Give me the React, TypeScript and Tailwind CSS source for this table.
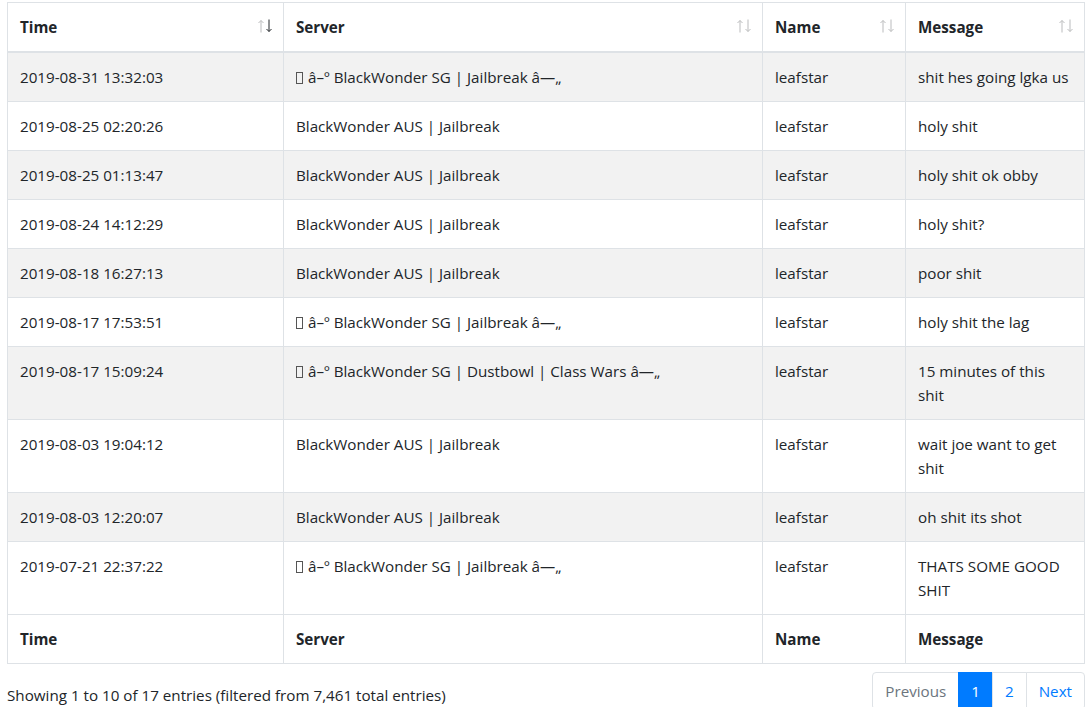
const rows = [
  { time: "2019-08-31 13:32:03", sg: true, server: "BlackWonder SG | Jailbreak", msg: "shit hes going lgka us" },
  { time: "2019-08-25 02:20:26", sg: false, server: "BlackWonder AUS | Jailbreak", msg: "holy shit" },
  { time: "2019-08-25 01:13:47", sg: false, server: "BlackWonder AUS | Jailbreak", msg: "holy shit ok obby" },
  { time: "2019-08-24 14:12:29", sg: false, server: "BlackWonder AUS | Jailbreak", msg: "holy shit?" },
  { time: "2019-08-18 16:27:13", sg: false, server: "BlackWonder AUS | Jailbreak", msg: "poor shit" },
  { time: "2019-08-17 17:53:51", sg: true, server: "BlackWonder SG | Jailbreak", msg: "holy shit the lag" },
  { time: "2019-08-17 15:09:24", sg: true, server: "BlackWonder SG | Dustbowl | Class Wars", msg: "15 minutes of this shit" },
  { time: "2019-08-03 19:04:12", sg: false, server: "BlackWonder AUS | Jailbreak", msg: "wait joe want to get shit" },
  { time: "2019-08-03 12:20:07", sg: false, server: "BlackWonder AUS | Jailbreak", msg: "oh shit its shot" },
  { time: "2019-07-21 22:37:22", sg: true, server: "BlackWonder SG | Jailbreak", msg: "THATS SOME GOOD SHIT" },
];

function Arrow({ up, className }: { up?: boolean; className: string }) {
  return (
    <svg width="6" height="14" viewBox="0 0 6 14" className={className} fill="none" stroke="#212529" strokeWidth="1">
      {up ? (
        <>
          <path d="M3 1.5V13.5" />
          <path d="M0.5 4L3 1.5L5.5 4" />
        </>
      ) : (
        <>
          <path d="M3 0.5V12.5" />
          <path d="M0.5 10L3 12.5L5.5 10" />
        </>
      )}
    </svg>
  );
}

function SortArrows({ active }: { active?: boolean }) {
  return (
    <>
      <Arrow up className="absolute right-[19px] top-[16px] opacity-30" />
      <Arrow className={"absolute right-[11px] top-[16px] " + (active ? "opacity-100" : "opacity-30")} />
    </>
  );
}

function ServerCell({ sg, server }: { sg: boolean; server: string }) {
  if (!sg) return <>{server}</>;
  return (
    <>
      <span className="inline-block w-[7px] h-[12px] border border-[#555] align-[-1px] mr-[5px]" />
      {"â–º " + server + " â—„"}
    </>
  );
}

export default function App() {
  const th = "relative border border-[#dee2e6] border-b-2 px-3 py-3 text-left font-bold leading-6 align-bottom";
  const td = "border border-[#dee2e6] px-3 py-3 leading-6 align-top";
  const tf = "border border-[#dee2e6] px-3 py-3 text-left font-bold leading-6";

  return (
    <div className="px-[7px] text-[15.2px] text-[#212529]" style={{ fontFamily: '"Open Sans", "Noto Sans", sans-serif' }}>
      <table className="w-[1077px] table-fixed border-collapse mt-[2px] mb-[6px]">
        <colgroup>
          <col className="w-[276px]" />
          <col className="w-[479px]" />
          <col className="w-[143px]" />
          <col className="w-[179px]" />
        </colgroup>
        <thead>
          <tr>
            <th className={th}>Time<SortArrows active /></th>
            <th className={th}>Server<SortArrows /></th>
            <th className={th}>Name<SortArrows /></th>
            <th className={th}>Message<SortArrows /></th>
          </tr>
        </thead>
        <tbody>
          {rows.map((r, i) => (
            <tr key={i} className={i % 2 === 0 ? "bg-[#f2f2f2]" : "bg-white"}>
              <td className={td}>{r.time}</td>
              <td className={td}><ServerCell sg={r.sg} server={r.server} /></td>
              <td className={td}>leafstar</td>
              <td className={td}>{r.msg}</td>
            </tr>
          ))}
        </tbody>
        <tfoot>
          <tr>
            <th className={tf}>Time</th>
            <th className={tf}>Server</th>
            <th className={tf}>Name</th>
            <th className={tf}>Message</th>
          </tr>
        </tfoot>
      </table>

      <div className="flex justify-between items-start">
        <div className="pt-[13px] leading-6">
          Showing 1 to 10 of 17 entries (filtered from 7,461 total entries)
        </div>
        <ul className="flex mt-[2px]">
          <li className="px-3 py-2 leading-5 border border-[#dee2e6] rounded-l-[4px] text-[#6c757d] bg-white">Previous</li>
          <li className="px-3 py-2 leading-5 border border-[#007bff] -ml-px bg-[#007bff] text-white">1</li>
          <li className="px-3 py-2 leading-5 border border-[#dee2e6] -ml-px text-[#007bff] bg-white">2</li>
          <li className="px-3 py-2 leading-5 border border-[#dee2e6] -ml-px rounded-r-[4px] text-[#007bff] bg-white">Next</li>
        </ul>
      </div>
    </div>
  );
}
